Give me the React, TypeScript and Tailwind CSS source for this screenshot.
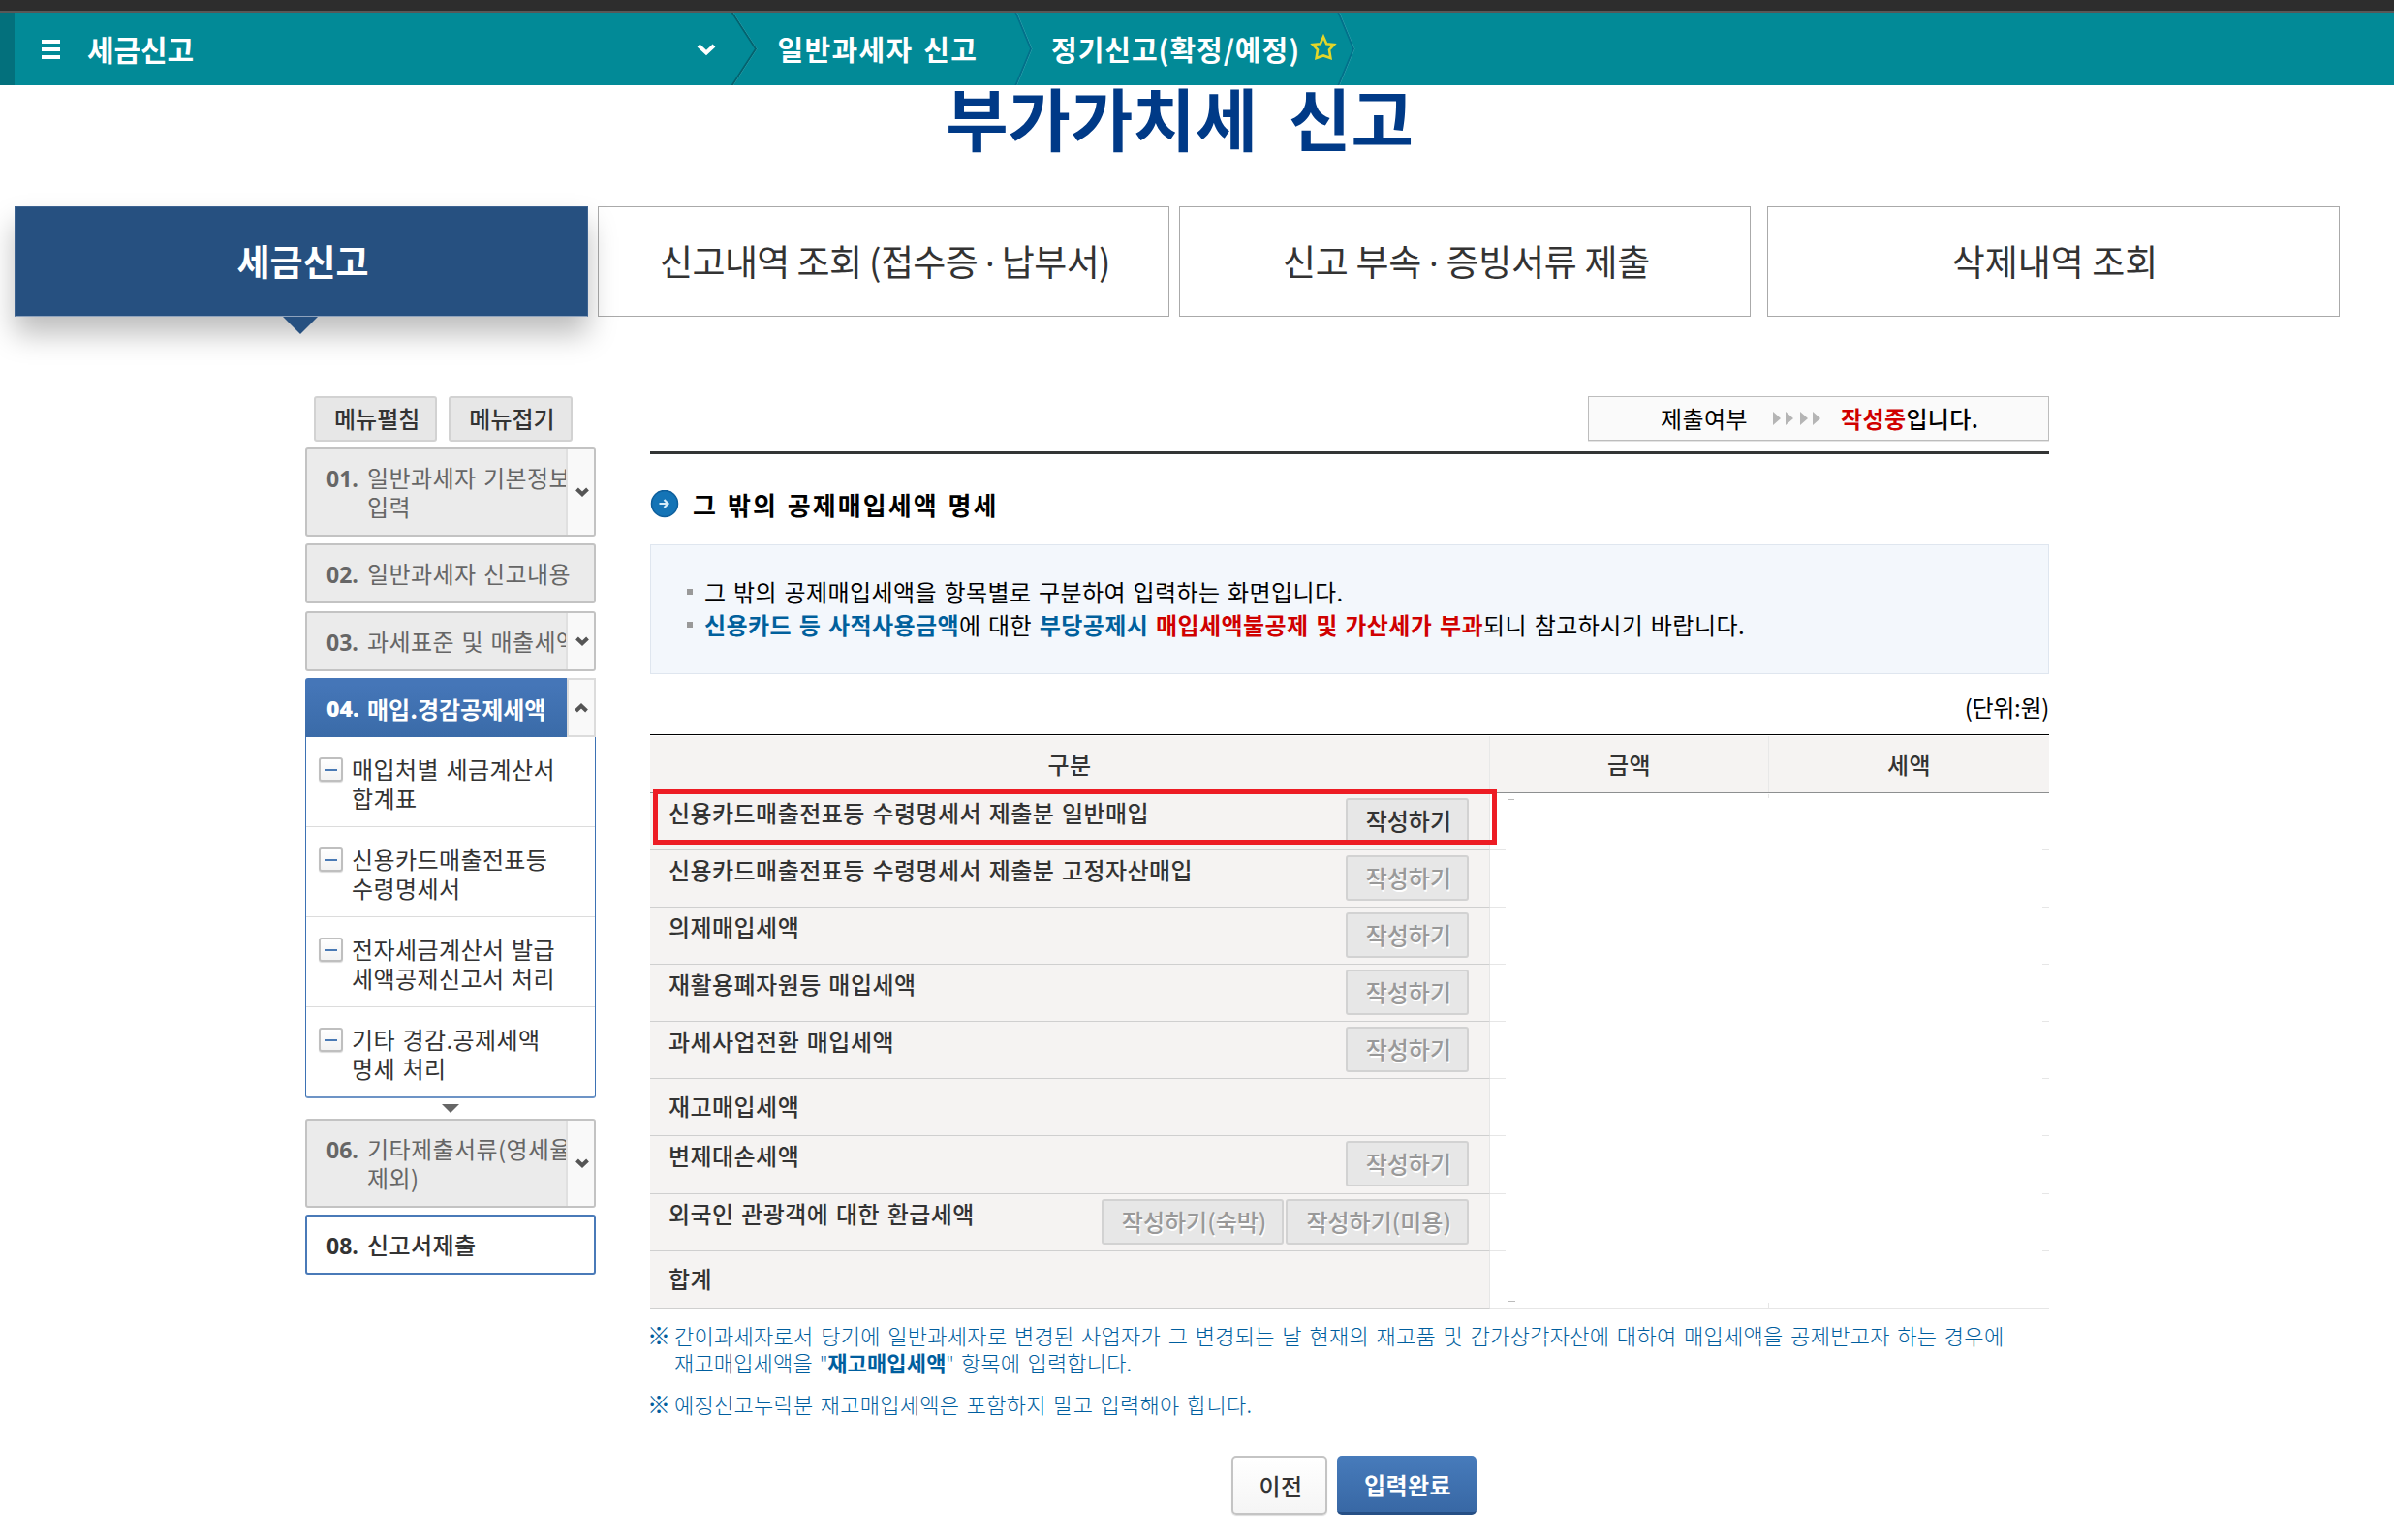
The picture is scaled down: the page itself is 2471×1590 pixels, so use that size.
import React from 'react';

function Crumb({ color, width }: { color: string; width: number }) {
  return (
    <svg width={width} height="75" viewBox={`0 0 ${width} 75`} fill="none" className="shrink-0">
      <path d={`M2 -1 L${width - 1} 37.5 L2 76`} stroke="#3aa7b1" strokeWidth="1" />
      <path d={`M1 -1 L${width - 2} 37.5 L1 76`} stroke={color} strokeWidth="1.8" />
    </svg>
  );
}

function TopBar() {
  return (
    <header className="relative z-10">
      <div className="h-[11px] bg-[#2d2d2d]" />
      <div className="h-[2px] bg-[#585858]" />
      <div className="flex h-[75px] items-center bg-[#028a97] text-[29px] font-bold tracking-[1.1px] text-white [word-spacing:3px]">
        <div className="h-full w-[15px] bg-[#03707c]" />
        <div className="ml-7 flex w-[19px] flex-col gap-[4px]">
          <span className="h-[4px] bg-white" />
          <span className="h-[4px] bg-white" />
          <span className="h-[4px] bg-white" />
        </div>
        <div className="ml-7 w-[628px] text-[30px] tracking-[-0.1px]">세금신고</div>
        <svg width="22" height="16" viewBox="0 0 22 16" fill="none" className="shrink-0">
          <path d="M3 4 L11 11.5 L19 4" stroke="white" strokeWidth="4" />
        </svg>
        <div className="w-[14px]" />
        <Crumb color="#04626e" width={28} />
        <div className="ml-[20.5px] w-[244.5px] tracking-[1.3px]">일반과세자 신고</div>
        <Crumb color="#02708a" width={19} />
        <div className="ml-[19px] w-[267px] tracking-[0.95px]">정기신고(확정/예정)</div>
        <svg width="28" height="28" viewBox="0 0 28 28" fill="none" className="-mt-1 shrink-0">
          <path
            d="M14 3 L17.2 10.2 L25 11 L20 16.4 L21.4 25 L14 22.4 L6.6 25 L8 16.4 L3 11 L10.8 10.2 Z"
            stroke="#e3d62a"
            strokeWidth="2.6"
          />
        </svg>
        <Crumb color="#02708a" width={19} />
      </div>
    </header>
  );
}

function Dot() {
  return <span className="font-['Open_Sans']">·</span>;
}

function Tabs() {
  const base = 'flex h-[114px] w-[590px] items-center justify-center border border-[#aaa] bg-white';
  return (
    <nav className="flex pl-[15px] text-[37px] text-[#333]">
      <div className="relative flex h-[114px] w-[592px] items-center justify-center border border-b-[#8fa3bd] border-[#3c6290] bg-[#265080] pl-[3px] font-bold text-white shadow-[0_18px_28px_rgba(0,0,0,0.26)]">
        <span>세금신고</span>
        <svg width="36" height="18" viewBox="0 0 36 18" className="absolute top-[113px] left-[276px]">
          <path d="M0 0 H36 L18 18 Z" fill="#265080" />
        </svg>
      </div>
      <div className={`${base} ml-[10px] pl-[3px] tracking-[-0.6px]`}>
        <span>
          신고내역 조회 (접수증 <Dot /> 납부서)
        </span>
      </div>
      <div className={`${base} ml-[10px] pl-[3px] tracking-[-0.3px]`}>
        <span>
          신고 부속 <Dot /> 증빙서류 제출
        </span>
      </div>
      <div className="ml-[17px] flex h-[114px] w-[591px] items-center justify-center border border-[#aaa] bg-white pl-[3px]">
        삭제내역 조회
      </div>
    </nav>
  );
}

function Chevron({ up }: { up?: boolean }) {
  return (
    <svg width="16" height="12" viewBox="0 0 16 12" fill="none">
      <path d={up ? 'M2.5 9 L8 3.8 L13.5 9' : 'M2.5 3 L8 8.2 L13.5 3'} stroke="#555" strokeWidth="4" />
    </svg>
  );
}

function MenuItem({ no, lines, arrow }: { no: string; lines: string[]; arrow?: boolean }) {
  return (
    <div className="flex w-[300px] overflow-hidden rounded-[3px] border-2 border-[#c3c3c3] bg-[#ebebeb] text-[#666]">
      <div className="flex flex-1 overflow-hidden pt-[14px] pb-[14px] pl-[20px]">
        <b className="h-[30px] w-[42px] shrink-0 font-['Open_Sans'] text-[23px] leading-[32px] tracking-normal">{no}</b>
        <div className="leading-[30px] whitespace-nowrap">
          {lines.map((l) => (
            <div key={l}>{l}</div>
          ))}
        </div>
      </div>
      {arrow && (
        <div className="flex w-[29px] shrink-0 items-center justify-center border-l-2 border-[#e0e0e0] bg-[#f9f9f9] pl-[2px]">
          <Chevron />
        </div>
      )}
    </div>
  );
}

function SmallButton({ children, muted }: { children: React.ReactNode; muted?: boolean }) {
  return (
    <button
      className={
        muted
          ? 'h-[47px] rounded-[3px] border-2 border-[#d2d2d2] bg-[#e7e7e7] pr-[16px] pb-[2px] pl-[19px] tracking-normal text-[#999] [text-shadow:1px_2px_0_#fff]'
          : 'h-[47px] rounded-[3px] border-2 border-[#d2d2d2] bg-[#e7e7e7] pr-[16px] pb-[2px] pl-[19px] tracking-normal text-[#333]'
      }
    >
      {children}
    </button>
  );
}

function SubItem({ lines, last }: { lines: string[]; last?: boolean }) {
  return (
    <li className={last ? 'flex h-[92px] pt-[18px]' : 'flex h-[93px] border-b border-[#dcdcdc] pt-[18px]'}>
      <span className="mt-[3px] ml-[13px] flex h-[25px] w-[25px] shrink-0 items-center justify-center rounded-[3px] border-2 border-[#bfbfbf] bg-linear-to-b from-white to-[#f2f2f2] shadow-[0_1px_1px_#ddd]">
        <span className="h-[2px] w-[13px] bg-[#4a7ab5]" />
      </span>
      <div className="ml-[9px] leading-[30px]">
        {lines.map((l) => (
          <div key={l}>{l}</div>
        ))}
      </div>
    </li>
  );
}

function Sidebar() {
  return (
    <aside className="w-[300px] shrink-0 whitespace-nowrap">
      <div className="flex gap-[12px] pl-[9px] font-medium">
        <SmallButton>메뉴펼침</SmallButton>
        <SmallButton>메뉴접기</SmallButton>
      </div>
      <div className="mt-[6px] flex flex-col gap-[7px]">
        <MenuItem no="01." lines={['일반과세자 기본정보', '입력']} arrow />
        <MenuItem no="02." lines={['일반과세자 신고내용']} />
        <div className="mt-px">
          <MenuItem no="03." lines={['과세표준 및 매출세액']} arrow />
        </div>
      </div>
      <div className="mt-[7px] flex h-[61px]">
        <div className="flex w-[270px] items-center rounded-tl-[3px] bg-linear-to-b from-[#4576b8] from-10% to-[#3a6ba8] pt-[2px] pl-[22px] font-bold text-white">
          <b className="w-[42px] font-['Open_Sans'] text-[23px] tracking-normal">04.</b>
          <span className="tracking-normal">매입.경감공제세액</span>
        </div>
        <div className="flex w-[30px] items-center justify-center border-2 border-[#dcdcdc] bg-[#f9f9f9]">
          <Chevron up />
        </div>
      </div>
      <ul className="rounded-b-[3px] border-x border-b-2 border-x-[#3d72b4] border-b-[#6d94c6] text-[#333]">
        <SubItem lines={['매입처별 세금계산서', '합계표']} />
        <SubItem lines={['신용카드매출전표등', '수령명세서']} />
        <SubItem lines={['전자세금계산서 발급', '세액공제신고서 처리']} />
        <SubItem lines={['기타 경감.공제세액', '명세 처리']} last />
      </ul>
      <svg width="18" height="9" viewBox="0 0 18 9" className="mt-[6px] ml-[141px] block">
        <path d="M0 0 H18 L9 9 Z" fill="#666" />
      </svg>
      <div className="mt-[6px]">
        <MenuItem no="06." lines={['기타제출서류(영세율', '제외)']} arrow />
      </div>
      <div className="mt-[7px] flex h-[62px] items-center rounded-[3px] border-2 border-[#4a7ab8] bg-white pl-[20px] font-medium text-[#333]">
        <b className="w-[42px] pt-[2px] font-['Open_Sans'] text-[23px] tracking-normal">08.</b>
        <span>신고서제출</span>
      </div>
    </aside>
  );
}

function Row({ label, buttons = [], active, tall }: { label: string; buttons?: string[]; active?: boolean; tall?: boolean }) {
  return (
    <div className={tall ? 'flex h-[60px]' : 'flex h-[59px]'}>
      <div
        className={
          buttons.length
            ? 'flex w-[867px] items-start justify-between border-r border-b border-r-[#e6e6e6] border-b-[#cfcfcf] bg-[#f5f3f2] pr-[21px] pl-[19px]'
            : 'flex w-[867px] items-center justify-between border-r border-b border-r-[#e6e6e6] border-b-[#cfcfcf] bg-[#f5f3f2] pr-[21px] pb-[2px] pl-[19px]'
        }
      >
        <span className={buttons.length ? 'leading-[39px] tracking-[0.45px]' : 'tracking-[0.45px]'}>{label}</span>
        {buttons.length > 0 && (
          <span className="flex gap-[2px] pt-[5px]">
            {buttons.map((b) => (
              <SmallButton key={b} muted={!active}>
                {b}
              </SmallButton>
            ))}
          </span>
        )}
      </div>
      <div className="w-[16px] border-b border-[#e6e6e6]" />
      <div className="ml-auto w-[7px] border-b border-[#e6e6e6]" />
    </div>
  );
}

function DetailTable() {
  return (
    <section className="relative border-t border-black font-medium text-[#333]">
      <div className="mt-px flex h-[59px] border-b border-[#8d8f90] bg-[#f5f3f2] text-center leading-[57px]">
        <div className="w-[867px] border-r border-[#e8e8e8]">구분</div>
        <div className="w-[288px] border-r border-[#e8e8e8]">금액</div>
        <div className="flex-1">세액</div>
      </div>
      <Row label="신용카드매출전표등 수령명세서 제출분 일반매입" buttons={['작성하기']} active />
      <Row label="신용카드매출전표등 수령명세서 제출분 고정자산매입" buttons={['작성하기']} />
      <Row label="의제매입세액" buttons={['작성하기']} />
      <Row label="재활용폐자원등 매입세액" buttons={['작성하기']} />
      <Row label="과세사업전환 매입세액" buttons={['작성하기']} />
      <Row label="재고매입세액" />
      <Row label="변제대손세액" buttons={['작성하기']} tall />
      <Row label="외국인 관광객에 대한 환급세액" buttons={['작성하기(숙박)', '작성하기(미용)']} />
      <Row label="합계" />
      <div className="absolute right-0 bottom-0 h-px w-[577px] bg-[#e6e6e6]" />
      <div className="absolute right-[289px] bottom-0 h-[6px] w-px bg-[#e6e6e6]" />
      <div className="absolute top-[61px] right-[289px] h-[4px] w-px bg-[#e6e6e6]" />
      <div className="absolute top-[66px] left-[885px] h-[7px] w-[7px] border-t border-l border-[#bbb]" />
      <div className="absolute bottom-[7px] left-[885px] h-[8px] w-[8px] border-b border-l border-[#bbb]" />
      <div className="absolute top-[56px] left-[3px] h-[57px] w-[871px] border-5 border-[#ed1c24]" />
    </section>
  );
}

function Main() {
  return (
    <main className="w-[1444px] whitespace-nowrap">
      <div className="ml-auto flex h-[46px] w-[476px] items-center border border-[#bdbdbd] bg-[#fafafa] pb-px pl-[74px] shadow-[0_1px_0_#e4e4e4]">
        <span>제출여부</span>
        <svg width="50" height="14" viewBox="0 0 50 14" fill="#b5b5b5" className="mr-[20px] ml-[26px]">
          <path d="M0 0 L8 7 L0 14Z M13 0 L21 7 L13 14Z M28 0 L36 7 L28 14Z M41 0 L49 7 L41 14Z" />
        </svg>
        <b className="font-medium">
          <span className="font-bold text-[#d00000]">작성중</span>입니다.
        </b>
      </div>
      <div className="mt-[11px] h-[3px] bg-[#333535]" />
      <h2 className="mt-[37px] flex h-[29px] items-center gap-[14px] text-[26px] font-bold tracking-[2.05px] [word-spacing:2px]">
        <svg width="30" height="29" viewBox="0 0 30 29" fill="none">
          <circle cx="15" cy="14" r="13.5" fill="#1474b6" stroke="#0e5f9c" strokeWidth="1.5" />
          <path d="M9.5 14 H18 M14.5 10 L18.5 14 L14.5 18" stroke="#d5edfa" strokeWidth="2.2" />
        </svg>
        <span>그 밖의 공제매입세액 명세</span>
      </h2>
      <ul className="mt-[27px] flex h-[134px] flex-col border border-[#dfe6ef] bg-[#f3f7fc] pt-[31px] pl-[37px] leading-[34px]">
        <li className="flex items-center gap-[12px]">
          <i className="h-[6px] w-[6px] bg-[#999]" />
          <span>그 밖의 공제매입세액을 항목별로 구분하여 입력하는 화면입니다.</span>
        </li>
        <li className="flex items-center gap-[12px]">
          <i className="h-[6px] w-[6px] bg-[#999]" />
          <span className="tracking-[0.43px]">
            <b className="font-bold text-[#00609c]">신용카드 등 사적사용금액</b>에 대한{' '}
            <b className="font-bold text-[#00609c]">부당공제시</b>{' '}
            <b className="font-bold text-[#d00000]">매입세액불공제 및 가산세가 부과</b>되니 참고하시기 바랍니다.
          </span>
        </li>
      </ul>
      <div className="h-[62px] pt-[16px] text-right leading-[36px] tracking-[-0.3px]">(단위:원)</div>
      <DetailTable />
      <div className="mt-[13px] text-[22px] leading-[28px] font-light tracking-[0.28px] text-[#005e9e] [word-spacing:2.4px]">
        <div className="flex">
          <span className="-ml-[3px] w-[28px] text-[24px]">※</span>
          <div>
            간이과세자로서 당기에 일반과세자로 변경된 사업자가 그 변경되는 날 현재의 재고품 및 감가상각자산에 대하여 매입세액을 공제받고자 하는 경우에
            <br />
            <span className="tracking-[0.16px]">
              재고매입세액을 <span className="font-['Open_Sans']">"</span>
              <b className="font-bold">재고매입세액</b>
              <span className="font-['Open_Sans']">"</span> 항목에 입력합니다.
            </span>
          </div>
        </div>
        <div className="mt-[14px] flex tracking-[0.24px]">
          <span className="-ml-[3px] w-[28px] text-[24px]">※</span>예정신고누락분 재고매입세액은 포함하지 말고 입력해야 합니다.
        </div>
      </div>
      <div className="mt-[40px] ml-[600px] flex gap-[10px]">
        <button className="h-[61px] w-[99px] rounded-[5px] border-2 border-[#c4c4c4] bg-linear-to-b from-white to-[#f5f5f5] pl-[3px] font-medium text-[#333] shadow-[0_1px_1px_#ddd]">
          이전
        </button>
        <button className="h-[61px] w-[144px] rounded-[5px] border-b-3 border-[#264f85] bg-linear-to-b from-[#477bbb] to-[#3868a5] pt-[1px] pl-[2px] font-bold text-white">
          입력완료
        </button>
      </div>
    </main>
  );
}

export default function App() {
  return (
    <div className="h-[1590px] w-[2471px] overflow-hidden bg-white font-['Noto_Sans_CJK_KR',sans-serif] text-[24px] text-black">
      <TopBar />
      <h1 className="-mt-[15px] h-[140px] pr-[36px] text-center text-[70px] leading-[96px] font-bold tracking-[0px] text-[#003a87] [word-spacing:16px]">
        부가가치세 신고
      </h1>
      <Tabs />
      <div className="mt-[82px] flex gap-[56px] pl-[315px] tracking-[0.4px] [word-spacing:1.8px]">
        <Sidebar />
        <Main />
      </div>
    </div>
  );
}
